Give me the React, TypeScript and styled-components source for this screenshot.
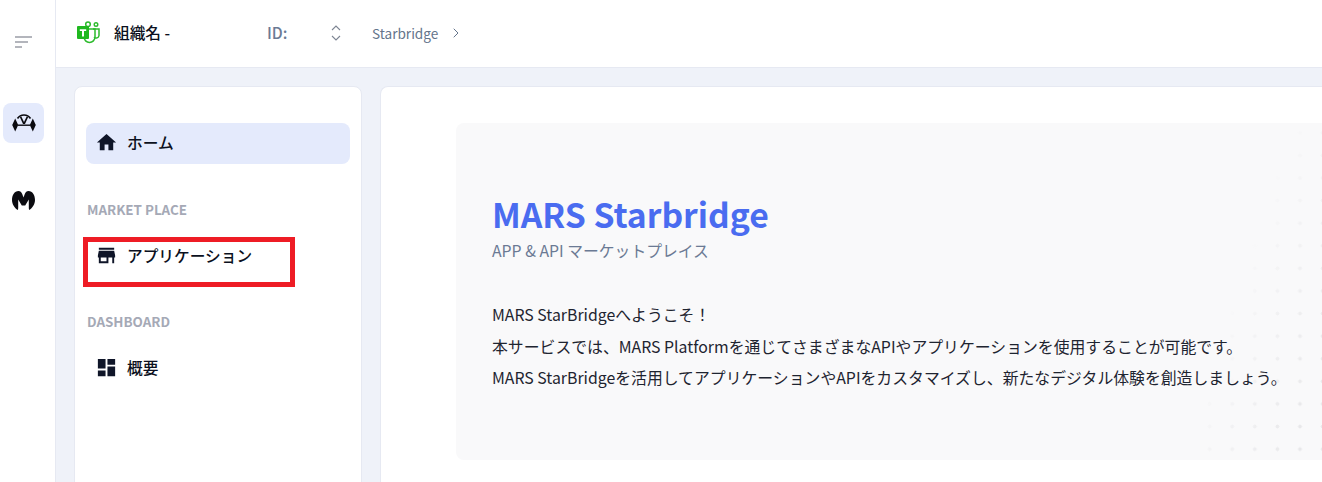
import styled, { createGlobalStyle } from "styled-components";
import { ChevronRight } from "lucide-react";

const GlobalStyle = createGlobalStyle`
  html, body {
    margin: 0;
    height: 100%;
    overflow: hidden;
    background: #eff2f9;
    font-family: "Noto Sans CJK JP", "Noto Sans", sans-serif;
  }
  * { box-sizing: border-box; }
`;

const Shell = styled.div`
  display: flex;
  width: 1322px;
  height: 482px;
  overflow: hidden;
  position: relative;
`;

const Rail = styled.aside`
  width: 56px;
  flex-shrink: 0;
  background: #fff;
  border-right: 1px solid #e6e9f2;
  display: flex;
  flex-direction: column;
  align-items: flex-start;
  padding: 36px 0 0 3px;
`;

const RailMenu = styled.div`
  height: 12px;
  margin: 0 0 55px 12px;
  color: #9a9da6;
  display: flex;
`;

const RailButton = styled.div<{ $active?: boolean }>`
  width: 41px;
  height: 40px;
  margin-bottom: 37px;
  border-radius: 8px;
  background: ${(p) => (p.$active ? "#e4eafc" : "transparent")};
  display: flex;
  align-items: center;
  justify-content: center;
`;

const Column = styled.div`
  flex: 1;
  min-width: 0;
  display: flex;
  flex-direction: column;
`;

const Header = styled.header`
  height: 68px;
  flex-shrink: 0;
  background: #fff;
  border-bottom: 1px solid #e6e9f2;
  display: flex;
  align-items: center;
  padding: 0 0 2px 20px;
`;

const OrgName = styled.span`
  margin-left: 14px;
  width: 153px;
  font-size: 15.7px;
  font-weight: 500;
  color: #0b1020;
`;

const IdLabel = styled.span`
  width: 64px;
  font-size: 15.7px;
  font-weight: 500;
  color: #6b7a94;
`;

const Crumb = styled.span`
  margin-left: 31px;
  font-size: 13.6px;
  color: #64748b;
`;

const Body = styled.div`
  flex: 1;
  display: flex;
  gap: 18px;
  padding: 18px 0 0 18px;
  min-height: 0;
`;

const Sidebar = styled.nav`
  width: 288px;
  flex-shrink: 0;
  height: 420px;
  background: #fff;
  border: 1px solid #e6e9f2;
  border-radius: 8px;
  padding: 36px 11px 0;
`;

const NavItem = styled.div<{ $active?: boolean }>`
  height: 41px;
  border-radius: 8px;
  background: ${(p) => (p.$active ? "#e4eafc" : "transparent")};
  display: flex;
  align-items: center;
  gap: 9px;
  padding: ${(p) => (p.$active ? "0 0 2px 9px" : "0 0 0 9px")};
  font-size: 15.7px;
  font-weight: 500;
  color: #0b1020;
`;

const SectionLabel = styled.div`
  margin: 36px 0 0 1px;
  padding-bottom: 16px;
  font-size: 13.4px;
  line-height: 19px;
  font-weight: 700;
  color: #a5a9b6;
`;

const Main = styled.main`
  flex: 1;
  min-width: 0;
  height: 420px;
  background: #fff;
  border: 1px solid #e6e9f2;
  border-right: none;
  border-radius: 8px 0 0 8px;
  padding: 36px 0 0 75px;
`;

const Hero = styled.section`
  position: relative;
  height: 337px;
  background: #f9f9fa;
  border-radius: 8px 0 0 8px;
  padding: 69px 36px 0;
  overflow: hidden;
`;

const DotField = styled.div`
  position: absolute;
  right: 0;
  top: 0;
  bottom: 0;
  width: 120px;
  background-image: radial-gradient(circle, #e8e8ea 1.7px, transparent 2.2px);
  background-size: 22.6px 22.6px;
  background-position: -3.7px -1.5px;
  -webkit-mask-image: linear-gradient(to bottom right, transparent 38%, #000 85%);
  mask-image: linear-gradient(to bottom right, transparent 38%, #000 85%);
`;

const Title = styled.h1`
  position: relative;
  margin: 0;
  font-size: 33.7px;
  line-height: 44px;
  font-weight: 700;
  color: #4a6cf0;
`;

const Subtitle = styled.p`
  position: relative;
  margin: 3px 0 36px;
  font-size: 15.8px;
  line-height: 24px;
  color: #6b7a94;
`;

const Copy = styled.p`
  position: relative;
  margin: 0;
  font-size: 15.85px;
  line-height: 31.5px;
  white-space: nowrap;
  color: #1e2430;
`;

const Callout = styled.div`
  position: absolute;
  left: 83px;
  top: 237px;
  width: 212px;
  height: 50px;
  border: 5px solid #ee1c25;
  pointer-events: none;
`;

const TeamsIcon = () => (
  <svg width="24" height="24" viewBox="0 0 24 24" fill="none">
    <circle cx="12" cy="3.200" r="2.300" stroke="#2dbb2d" strokeWidth="1.500" />
    <circle cx="20" cy="3.500" r="1.800" stroke="#2dbb2d" strokeWidth="1.400" />
    <path d="M8 8v8a5.500 5.500 0 0 0 11 0V8z" fill="#fff" stroke="#2dbb2d" strokeWidth="1.500" />
    <path d="M17 8h6v6.500a3 3 0 0 1-5 1.800" stroke="#2dbb2d" strokeWidth="1.500" />
    <rect x="1" y="5" width="12" height="13" rx="1" fill="#1fb81f" />
    <path d="M3.800 8.200h6.400v1.800H8v5.400H6V10H3.800z" fill="#fff" />
  </svg>
);

const MenuLines = () => (
  <svg width="18" height="12" viewBox="0 0 18 12" fill="none" stroke="currentColor" strokeWidth="1.500">
    <path d="M0 1h17M0 6h13M0 11h7" />
  </svg>
);

const UpDown = () => (
  <svg width="10" height="18" viewBox="0 0 10 18" fill="none" stroke="#7d8593" strokeWidth="1.100">
    <path d="M1 6l4-4 4 4M1 12l4 4 4-4" />
  </svg>
);

const BridgeIcon = () => (
  <svg width="24" height="18" viewBox="0 0 24 18" fill="#0b0b10">
    <path d="M5.500 4.500C7 2.200 9.300 1 12 1s5 1.200 6.500 3.500" fill="none" stroke="#0b0b10" strokeWidth="1.700" />
    <path d="M7.800 3l1.500-.6L12 8l2.700-5.600 1.500.6-3.200 7h-2z" />
    <path d="M6 10.500h12v1.400H6z" />
    <path d="M3.200 4.500L6.200 11 3.200 17.500.2 11zM20.800 4.500L23.800 11l-3 6.500-3-6.500z" />
  </svg>
);

const MarsIcon = () => (
  <svg width="23" height="19" viewBox="0 0 23 19" fill="#0b0b10">
    <path d="M6.500 0C8.300 0 9.400 1.300 10.200 3L11.500 6.500 12.800 3C13.600 1.300 14.700 0 16.500 0 20.500 0 23 4 23 9c0 4-2.500 8-5.800 10-.3-.6-.4-1.400-.4-2.200V8.500L13.200 14.500H9.800L6.200 8.500v8.300c0 .8-.1 1.600-.4 2.200C2.500 17 0 13 0 9 0 4 2.500 0 6.500 0z" />
  </svg>
);

const HomeIcon = () => (
  <svg width="23" height="23" viewBox="0 0 24 24" fill="#0f1528">
    <path d="M10 20v-6h4v6h5v-8h3L12 3 2 12h3v8z" />
  </svg>
);

const StoreIcon = () => (
  <svg width="23" height="23" viewBox="0 0 24 24" fill="#0f1528">
    <path d="M20 4H4v2h16V4zm1 10v-2l-1-5H4l-1 5v2h1v6h10v-6h4v6h2v-6h1zm-9 4H6v-4h6v4z" />
  </svg>
);

const DashboardIcon = () => (
  <svg width="23" height="23" viewBox="0 0 24 24" fill="#0f1528">
    <path d="M3 13h8V3H3v10zm0 8h8v-6H3v6zm10 0h8V11h-8v10zm0-18v6h8V3h-8z" />
  </svg>
);

const App = () => {
  return (
    <Shell>
      <GlobalStyle />
      <Rail>
        <RailMenu>
          <MenuLines />
        </RailMenu>
        <RailButton $active>
          <BridgeIcon />
        </RailButton>
        <RailButton>
          <MarsIcon />
        </RailButton>
      </Rail>
      <Column>
        <Header>
          <TeamsIcon />
          <OrgName>組織名 -</OrgName>
          <IdLabel>ID:</IdLabel>
          <UpDown />
          <Crumb>Starbridge</Crumb>
          <ChevronRight size={16} strokeWidth={1.5} color="#64748b" style={{ marginLeft: 10 }} />
        </Header>
        <Body>
          <Sidebar>
            <NavItem $active>
              <HomeIcon />
              ホーム
            </NavItem>
            <SectionLabel>MARKET PLACE</SectionLabel>
            <NavItem>
              <StoreIcon />
              アプリケーション
            </NavItem>
            <SectionLabel>DASHBOARD</SectionLabel>
            <NavItem>
              <DashboardIcon />
              概要
            </NavItem>
          </Sidebar>
          <Main>
            <Hero>
              <DotField />
              <Title>MARS Starbridge</Title>
              <Subtitle>APP &amp; API マーケットプレイス</Subtitle>
              <Copy>MARS StarBridgeへようこそ！</Copy>
              <Copy>本サービスでは、MARS Platformを通じてさまざまなAPIやアプリケーションを使用することが可能です。</Copy>
              <Copy>MARS StarBridgeを活用してアプリケーションやAPIをカスタマイズし、新たなデジタル体験を創造しましょう。</Copy>
            </Hero>
          </Main>
        </Body>
      </Column>
      <Callout />
    </Shell>
  );
};

export default App;
